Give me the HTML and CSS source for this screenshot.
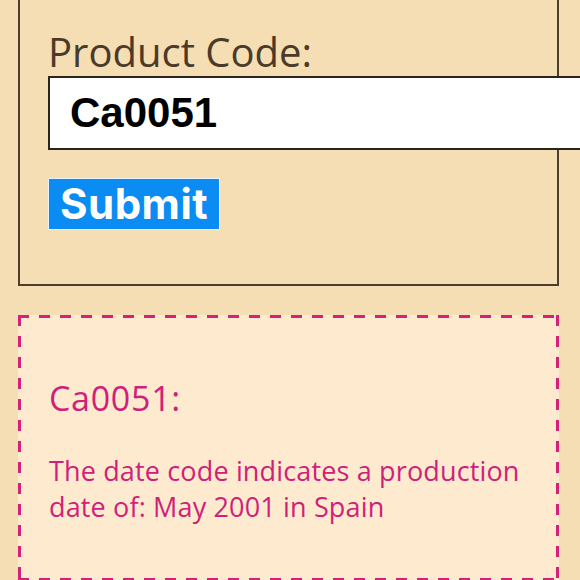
FILE: index.html
```html
<!DOCTYPE html>
<html>
<head>
    <title>Date Code Lookup</title>
    <link rel="stylesheet" href="styles.css">
</head>
<body>
    <div class="page">
        <form class="lookup">
            <label class="field-label" for="code">Product Code:</label>
            <input class="code-input" id="code" type="text" value="Ca0051">
            <button class="submit" type="button">Submit</button>
        </form>
        <div class="result">
            <h2 class="result-code">Ca0051:</h2>
            <p class="result-text">The date code indicates a production date of: May 2001 in Spain</p>
        </div>
    </div>
</body>
</html>
```

FILE: styles.css
```css
body {
    margin: 0;
    background-color: #f5deb3;
    font-family: "Open Sans", Lato, sans-serif;
    overflow: hidden;
}
.page {
    margin-top: -35px;
    padding: 0 21px 0 18px;
}
.lookup {
    display: flex;
    flex-direction: column;
    align-items: flex-start;
    border: 2px solid #4e3d2c;
    padding: 62px 0 54px 28px;
}
.field-label {
    font-size: 40px;
    line-height: 46px;
    color: #4b3a2a;
}
.code-input {
    box-sizing: border-box;
    width: 560px;
    height: 74px;
    margin-top: 1px;
    padding: 0 20px;
    border: 2px solid #2b241d;
    background-color: #fff;
    font-family: "Liberation Sans", Arial, sans-serif;
    font-weight: bold;
    font-size: 42px;
    color: #000;
    outline: none;
}
.submit {
    margin-top: 28px;
    height: 52px;
    padding: 0 11px;
    border: 1px solid #e8f2fb;
    background-color: #0b8cf2;
    color: #fff;
    font-family: Inter, Roboto, sans-serif;
    font-weight: 700;
    font-size: 42px;
    line-height: 50px;
    letter-spacing: 0.5px;
}
/* dashed frame drawn with gradients so the dash length matches */
.result {
    margin-top: 29px;
    height: 266px;
    box-sizing: border-box;
    padding: 63px 31px 0;
    color: #d0217a;
    background:
        repeating-linear-gradient(90deg, #d6217a 0 11px, transparent 11px 21px) top left / 100% 3px no-repeat,
        repeating-linear-gradient(90deg, #d6217a 0 11px, transparent 11px 21px) bottom left / 100% 3px no-repeat,
        repeating-linear-gradient(180deg, #d6217a 0 11px, transparent 11px 21px) top left / 3px 100% no-repeat,
        repeating-linear-gradient(180deg, #d6217a 0 11px, transparent 11px 21px) top right / 3px 100% no-repeat,
        #feebcf;
}
.result-code {
    margin: 0;
    font-size: 34px;
    font-weight: normal;
    line-height: 40px;
    letter-spacing: 0.7px;
}
.result-text {
    margin: 35px 0 0;
    font-size: 27px;
    line-height: 36px;
    letter-spacing: 0.15px;
}
```
